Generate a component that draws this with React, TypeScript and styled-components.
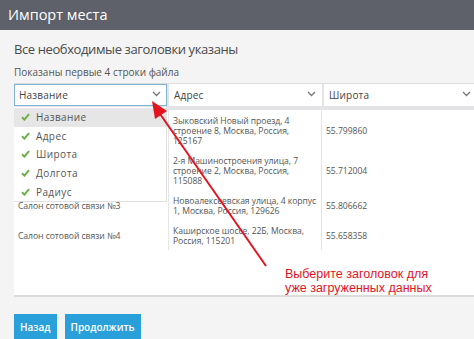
import React from 'react';
import styled, { createGlobalStyle } from 'styled-components';

const GlobalStyle = createGlobalStyle`
  html, body {
    margin: 0;
    padding: 0;
    background: #f4f4f4;
    overflow: hidden;
  }
  body {
    font-family: "Open Sans", "Noto Sans", sans-serif;
    color: #555;
  }
`;

const columns = ['Название', 'Адрес', 'Широта'];

const menuItems = ['Название', 'Адрес', 'Широта', 'Долгота', 'Радиус'];

const rows = [
  {
    name: '',
    address: ['Зыковский Новый проезд, 4', 'строение 8, Москва, Россия,', '125167'],
    lat: '55.799860',
  },
  {
    name: '',
    address: ['2-я Машиностроения улица, 7', 'строение 2, Москва, Россия,', '115088'],
    lat: '55.712004',
  },
  {
    name: 'Салон сотовой связи №3',
    address: ['Новоалексеевская улица, 4 корпус', '1, Москва, Россия, 129626'],
    lat: '55.806662',
  },
  {
    name: 'Салон сотовой связи №4',
    address: ['Каширское шоссе, 22Б, Москва,', 'Россия, 115201'],
    lat: '55.658358',
  },
];

const Chevron = () => (
  <svg width="9" height="6" viewBox="0 0 9 6">
    <path d="M1 1 L4.5 4.5 L8 1" fill="none" stroke="#777" strokeWidth="1.3" />
  </svg>
);

const Check = () => (
  <svg width="9" height="8" viewBox="0 0 9 8">
    <path d="M1 4.2 L3.4 6.6 L8 1.2" fill="none" stroke="#6cae4a" strokeWidth="2" />
  </svg>
);

export default function App() {
  return (
    <>
      <GlobalStyle />
      <Page>
        <TitleBar>Импорт места</TitleBar>
        <Body>
          <Heading>Все необходимые заголовки указаны</Heading>
          <Note>Показаны первые 4 строки файла</Note>
          <Panel>
            <HeaderRow>
              {columns.map((c, i) => (
                <Select key={c} $focused={i === 0}>
                  <span>{c}</span>
                  <Chevron />
                </Select>
              ))}
            </HeaderRow>
            <Divider />
            <Table>
              {rows.map((r, i) => (
                <Row key={i}>
                  <Cell>{r.name}</Cell>
                  <Cell $ruled>
                    {r.address.map((l) => (
                      <div key={l}>{l}</div>
                    ))}
                  </Cell>
                  <Cell $ruled>{r.lat}</Cell>
                  <Cell $ruled />
                </Row>
              ))}
            </Table>
            <Menu>
              {menuItems.map((m, i) => (
                <MenuItem key={m} $active={i === 0}>
                  <Check />
                  <span>{m}</span>
                </MenuItem>
              ))}
            </Menu>
            <Hint>
              Выберите заголовок для
              <br />
              уже загруженных данных
            </Hint>
            <Pointer width="140" height="180" viewBox="0 0 140 180">
              <line x1="120" y1="170" x2="12" y2="15" stroke="#e3141f" strokeWidth="2" />
              <polygon points="6,5 9,23 21,15" fill="#e3141f" />
            </Pointer>
          </Panel>
          <Buttons>
            <Button>Назад</Button>
            <Button>Продолжить</Button>
          </Buttons>
        </Body>
      </Page>
    </>
  );
}

const Page = styled.div`
  display: flex;
  flex-direction: column;
  width: 474px;
  height: 339px;
  overflow: hidden;
`;

const TitleBar = styled.div`
  height: 30px;
  background: #5e6169;
  color: #fff;
  font-size: 14.5px;
  line-height: 30px;
  padding-left: 8px;
`;

const Body = styled.div`
  padding: 0 0 0 14px;
  display: flex;
  flex-direction: column;
`;

const Heading = styled.div`
  font-size: 13px;
  letter-spacing: -0.4px;
  color: #4a4a4a;
  margin-top: 9px;
  line-height: 20px;
`;

const Note = styled.div`
  font-size: 10px;
  color: #555;
  margin-top: 6px;
  line-height: 14px;
`;

const Panel = styled.div`
  position: relative;
  margin-top: 4px;
  width: 480px;
  height: 214px;
  background: #fff;
  border-top: 1px solid #dcdcdc;
  border-bottom: 2px solid #dcdcdc;
  box-sizing: border-box;
`;

const HeaderRow = styled.div`
  display: grid;
  grid-template-columns: 153px 153px 153px;
  column-gap: 2px;
  background: #e4e4e6;
  height: 22px;
`;

const Select = styled.div<{ $focused?: boolean }>`
  display: flex;
  align-items: center;
  justify-content: space-between;
  box-sizing: border-box;
  background: #fff;
  border: 1px solid ${(p) => (p.$focused ? '#7fb4d6' : '#fff')};
  padding: 0 5px 0 4px;
  font-size: 10px;
  letter-spacing: 0.2px;
  color: #444;
  svg {
    margin-top: -2px;
  }
`;

const Divider = styled.div`
  height: 4px;
  background: #e4e4e6;
`;

const Table = styled.div`
  display: flex;
  flex-direction: column;
`;

const Row = styled.div`
  display: grid;
  grid-template-columns: 154px 153px 153px 1fr;
`;

const Cell = styled.div<{ $ruled?: boolean }>`
  display: flex;
  flex-direction: column;
  justify-content: center;
  padding: 6px 4px 4px 4px;
  font-size: 8.6px;
  letter-spacing: -0.05px;
  line-height: 10px;
  white-space: nowrap;
  color: #555;
  border-left: ${(p) => (p.$ruled ? '1px solid #e6e6e6' : 'none')};
`;

const Menu = styled.div`
  position: absolute;
  top: 23px;
  left: 0;
  width: 153px;
  background: #fff;
  border-right: 1px solid #e0e0e0;
  border-bottom: 1px solid #e0e0e0;
  box-sizing: border-box;
  padding-top: 1px;
`;

const MenuItem = styled.div<{ $active?: boolean }>`
  display: flex;
  align-items: center;
  gap: 6px;
  height: 18.6px;
  padding-left: 7px;
  font-size: 10px;
  letter-spacing: 0.4px;
  color: #555;
  background: ${(p) => (p.$active ? '#e6e6e6' : '#fff')};
`;

const Hint = styled.div`
  position: absolute;
  left: 271px;
  top: 183px;
  font-family: "Liberation Sans", Arial, sans-serif;
  font-size: 12.5px;
  line-height: 14px;
  color: #e3141f;
`;

const Pointer = styled.svg`
  position: absolute;
  left: 132px;
  top: 12px;
`;

const Buttons = styled.div`
  display: flex;
  gap: 8px;
  margin-top: 17px;
`;

const Button = styled.button`
  background: #2aa0da;
  color: #fff;
  border: none;
  font-family: "Open Sans", sans-serif;
  font-weight: 600;
  font-size: 10px;
  height: 26px;
  padding: 0 6px;
`;
